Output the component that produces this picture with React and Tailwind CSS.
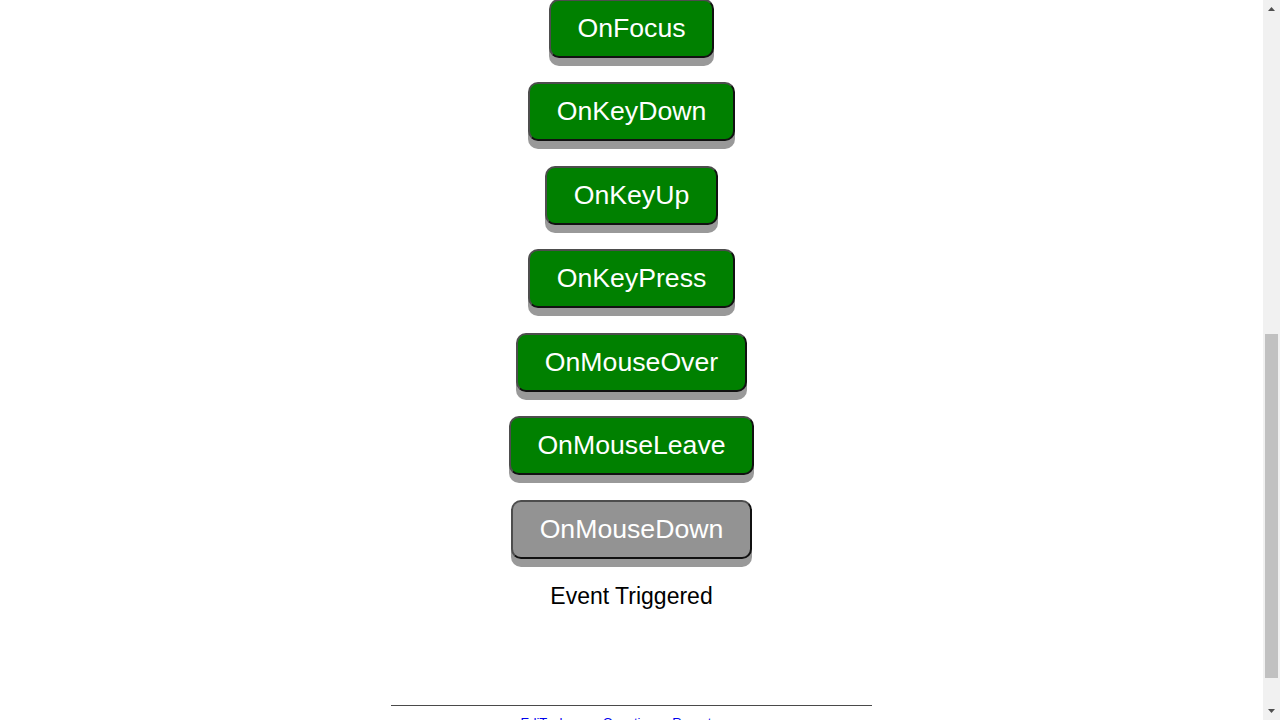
import { useLayoutEffect, useRef } from "react";

const hidden = ["OnClick", "OnDblClick", "OnContextMenu", "OnChange", "OnInput", "OnBlur", "OnSelect"];
const visible = ["OnFocus", "OnKeyDown", "OnKeyUp", "OnKeyPress", "OnMouseOver", "OnMouseLeave"];

function EventButton({ label, active, btnRef }) {
  return (
    <button
      ref={btnRef}
      type="button"
      className={
        "h-[59px] px-[26.5px] rounded-[10px] border-2 border-t-[#4d4d4d] border-l-[#4d4d4d] border-b-[#111] border-r-[#111] text-white text-[26.67px] leading-none shadow-[0_8px_0_#999] " +
        (active ? "bg-[#939393]" : "bg-[#008000]")
      }
    >
      {label}
    </button>
  );
}

// classic-looking scrollbar, drawn since the headless browser uses overlay bars
function ScrollTrack() {
  return (
    <div className="relative w-[17px] h-screen shrink-0 bg-[#f1f1f1]">
      <svg className="absolute left-[4px] top-[6px]" width="9" height="6" viewBox="0 0 9 6">
        <path d="M4.5 1 L8 5 L1 5 Z" fill="#505050" />
      </svg>
      <div className="absolute left-[2px] top-[334px] w-[13px] h-[344px] bg-[#c1c1c1]" />
      <svg className="absolute left-[4px] top-[708px]" width="9" height="6" viewBox="0 0 9 6">
        <path d="M1 1 L8 1 L4.5 5 Z" fill="#505050" />
      </svg>
    </div>
  );
}

export default function App() {
  const scroller = useRef(null);
  const focusBtn = useRef(null);

  // page is shown scrolled so OnFocus sits at the top edge
  useLayoutEffect(() => {
    if (scroller.current && focusBtn.current) {
      scroller.current.scrollTop = focusBtn.current.offsetTop + 1;
    }
  }, []);

  return (
    <div className="flex h-screen bg-white font-['Liberation_Sans',Arial,sans-serif] text-black">
      <div
        ref={scroller}
        className="relative flex-1 h-screen overflow-y-scroll [scrollbar-width:none]"
      >
        <div className="flex flex-col items-center pt-[20px] pb-[43px]">
          <h1 className="text-[32px] leading-[37px] font-bold mb-[20px]">React Events</h1>

          <div className="flex flex-col items-center gap-[24.5px]">
            {hidden.map((h) => (
              <EventButton key={h} label={h} />
            ))}
            {visible.map((v) => (
              <EventButton key={v} label={v} btnRef={v === "OnFocus" ? focusBtn : undefined} />
            ))}
            <EventButton label="OnMouseDown" active />
          </div>

          <p className="mt-[24px] text-[23px] leading-[26px]">Event Triggered</p>

          <hr className="mt-[96px] w-[481px] h-px border-0 bg-[#4a4a4a]" />

          <div className="mt-[9px] flex text-[13px] leading-[15px] text-[#0000ee] whitespace-nowrap">
            <a href="#" className="mr-[36px]">EdiTech</a>
            <a href="#" className="mr-[11px]">Questions</a>
            <a href="#">Report error</a>
          </div>
        </div>
      </div>
      <ScrollTrack />
    </div>
  );
}
